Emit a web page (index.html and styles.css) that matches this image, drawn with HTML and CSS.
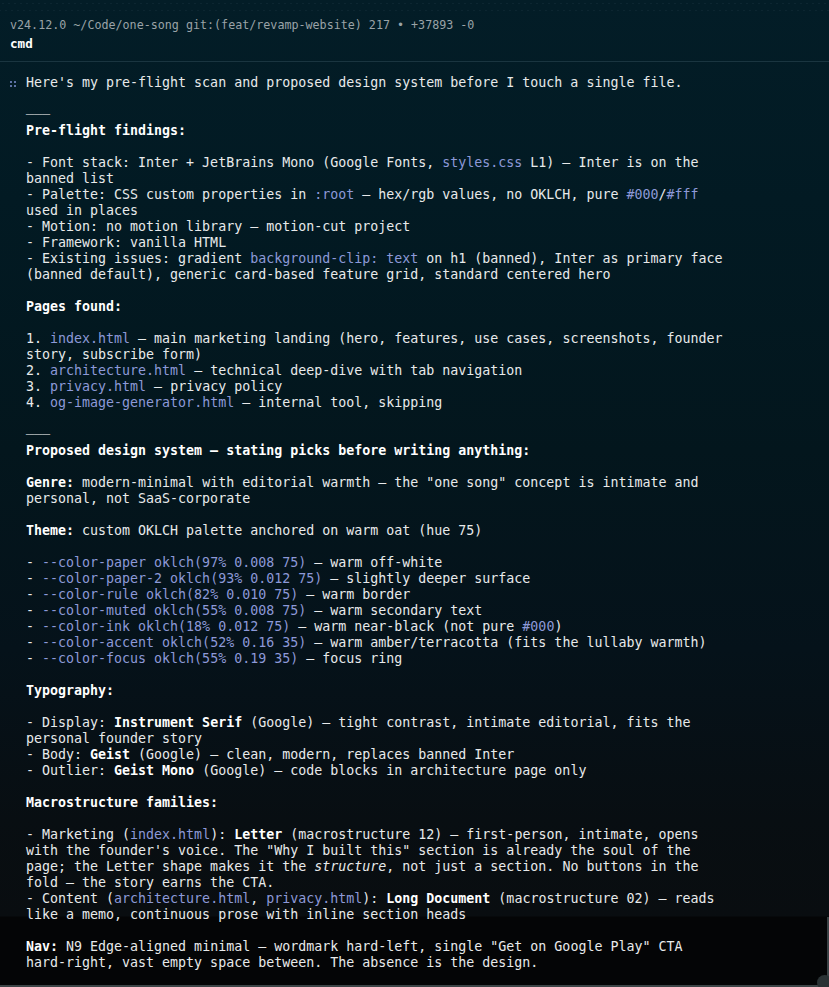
FILE: index.html
```html
<!DOCTYPE html>
<html lang="en">
<head>
<meta charset="utf-8">
<title>Terminal</title>
<link rel="stylesheet" href="styles.css">
</head>
<body>
<div class="screen">
  <header class="prompt">
    <div class="prompt-path">v24.12.0 ~/Code/one-song git:(feat/revamp-website) 217 • +37893 -0</div>
    <div class="prompt-cmd">cmd</div>
  </header>
  <div class="divider"></div>
  <main class="message">
    <div class="bullet"><svg width="6" height="6" viewBox="0 0 6 6"><rect x="0" y="0" width="2" height="2"/><rect x="4" y="0" width="2" height="2"/><rect x="0" y="4" width="2" height="2"/><rect x="4" y="4" width="2" height="2"/></svg></div>
<pre class="text">Here's my pre-flight scan and proposed design system before I touch a single file.

<span class="rule">───</span>
<b>Pre-flight findings:</b>

- Font stack: Inter + JetBrains Mono (Google Fonts, <span class="c">styles.css</span> L1) — Inter is on the
banned list
- Palette: CSS custom properties in <span class="c">:root</span> — hex/rgb values, no OKLCH, pure <span class="c">#000</span>/<span class="c">#fff</span>
used in places
- Motion: no motion library — motion-cut project
- Framework: vanilla HTML
- Existing issues: gradient <span class="c">background-clip: text</span> on h1 (banned), Inter as primary face
(banned default), generic card-based feature grid, standard centered hero

<b>Pages found:</b>

1. <span class="c">index.html</span> — main marketing landing (hero, features, use cases, screenshots, founder
story, subscribe form)
2. <span class="c">architecture.html</span> — technical deep-dive with tab navigation
3. <span class="c">privacy.html</span> — privacy policy
4. <span class="c">og-image-generator.html</span> — internal tool, skipping

<span class="rule">───</span>
<b>Proposed design system — stating picks before writing anything:</b>

<b>Genre:</b> modern-minimal with editorial warmth — the "one song" concept is intimate and
personal, not SaaS-corporate

<b>Theme:</b> custom OKLCH palette anchored on warm oat (hue 75)

- <span class="c">--color-paper oklch(97% 0.008 75)</span> — warm off-white
- <span class="c">--color-paper-2 oklch(93% 0.012 75)</span> — slightly deeper surface
- <span class="c">--color-rule oklch(82% 0.010 75)</span> — warm border
- <span class="c">--color-muted oklch(55% 0.008 75)</span> — warm secondary text
- <span class="c">--color-ink oklch(18% 0.012 75)</span> — warm near-black (not pure <span class="c">#000</span>)
- <span class="c">--color-accent oklch(52% 0.16 35)</span> — warm amber/terracotta (fits the lullaby warmth)
- <span class="c">--color-focus oklch(55% 0.19 35)</span> — focus ring

<b>Typography:</b>

- Display: <b>Instrument Serif</b> (Google) — tight contrast, intimate editorial, fits the
personal founder story
- Body: <b>Geist</b> (Google) — clean, modern, replaces banned Inter
- Outlier: <b>Geist Mono</b> (Google) — code blocks in architecture page only

<b>Macrostructure families:</b>

- Marketing (<span class="c">index.html</span>): <b>Letter</b> (macrostructure 12) — first-person, intimate, opens
with the founder's voice. The "Why I built this" section is already the soul of the
page; the Letter shape makes it the <i>structure</i>, not just a section. No buttons in the
fold — the story earns the CTA.
- Content (<span class="c">architecture.html</span>, <span class="c">privacy.html</span>): <b>Long Document</b> (macrostructure 02) — reads
like a memo, continuous prose with inline section heads

<b>Nav:</b> N9 Edge-aligned minimal — wordmark hard-left, single "Get on Google Play" CTA
hard-right, vast empty space between. The absence is the design.</pre>
  </main>
  <div class="resize-knob"></div>
</div>
</body>
</html>
```

FILE: styles.css
```css
html, body {
  margin: 0;
  padding: 0;
  height: 100%;
}

body {
  overflow: hidden;
  background: #040506;
  font-family: "DejaVu Sans Mono", "Liberation Mono", monospace;
  color: #e4e7e8;
}

.screen {
  position: relative;
  height: 987px;
  box-sizing: border-box;
  background:
    linear-gradient(#3a4245, #3a4245) right bottom / 2px 70px no-repeat,
    linear-gradient(#3d4547, #3d4547) left bottom / 100% 2px no-repeat,
    linear-gradient(180deg,
      #031d27 0px,
      #021a23 200px,
      #03161d 450px,
      #05121a 650px,
      #080e12 820px,
      #090d10 916px,
      #040506 917px,
      #040506 100%);
}

.prompt {
  padding: 16px 0 0 10px;
  background:
    radial-gradient(circle, rgba(150, 190, 200, 0.06) 0.6px, transparent 1px) 0 0 / 6px 7px repeat-x,
    radial-gradient(circle, rgba(150, 190, 200, 0.06) 0.6px, transparent 1px) 3px 7px / 6px 7px repeat-x;
}

.prompt-path {
  font-size: 11.7px;
  line-height: 18px;
  color: #9aa3a7;
  white-space: pre;
}

.prompt-cmd {
  font-size: 12.6px;
  line-height: 20px;
  font-weight: bold;
  color: #ffffff;
}

.divider {
  margin-top: 7px;
  height: 1px;
  background: #1a3540;
}

.message {
  display: flex;
  padding: 13px 0 0 10px;
}

.bullet {
  width: 16px;
  flex: none;
  padding-top: 6px;
  box-sizing: border-box;
}

.bullet svg {
  display: block;
  fill: #5d72a6;
}

.text {
  margin: 0;
  font-family: "DejaVu Sans Mono", "Liberation Mono", monospace;
  font-size: 13.3px;
  line-height: 16px;
  color: #e8eaeb;
  white-space: pre;
}

.text b {
  font-weight: bold;
  color: #ffffff;
}

.text i {
  font-style: italic;
}

.c {
  color: #8d99d8;
}

.rule {
  color: #9aa1a4;
}

.resize-knob {
  position: absolute;
  right: -3px;
  bottom: -3px;
  width: 15px;
  height: 15px;
  border-radius: 50%;
  background: #2a3234;
}
```
